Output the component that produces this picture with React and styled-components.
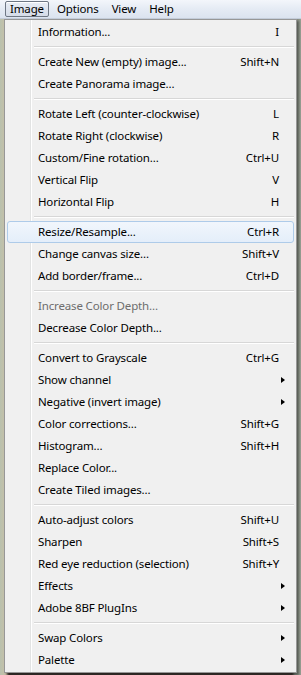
import styled, { createGlobalStyle } from "styled-components";

const GlobalStyle = createGlobalStyle`
    html, body { margin: 0; padding: 0; }
    body {
        font-family: "Noto Sans", "Liberation Sans", sans-serif;
        font-size: 11.5px;
        letter-spacing: -0.15px;
        color: #000;
    }
`;

const groups = [
    [{ label: "Information...", shortcut: "I" }],
    [
        { label: "Create New (empty) image...", shortcut: "Shift+N" },
        { label: "Create Panorama image..." },
    ],
    [
        { label: "Rotate Left (counter-clockwise)", shortcut: "L" },
        { label: "Rotate Right (clockwise)", shortcut: "R" },
        { label: "Custom/Fine rotation...", shortcut: "Ctrl+U" },
        { label: "Vertical Flip", shortcut: "V" },
        { label: "Horizontal Flip", shortcut: "H" },
    ],
    [
        { label: "Resize/Resample...", shortcut: "Ctrl+R", active: true },
        { label: "Change canvas size...", shortcut: "Shift+V" },
        { label: "Add border/frame...", shortcut: "Ctrl+D" },
    ],
    [
        { label: "Increase Color Depth...", disabled: true },
        { label: "Decrease Color Depth..." },
    ],
    [
        { label: "Convert to Grayscale", shortcut: "Ctrl+G" },
        { label: "Show channel", sub: true },
        { label: "Negative (invert image)", sub: true },
        { label: "Color corrections...", shortcut: "Shift+G" },
        { label: "Histogram...", shortcut: "Shift+H" },
        { label: "Replace Color..." },
        { label: "Create Tiled images..." },
    ],
    [
        { label: "Auto-adjust colors", shortcut: "Shift+U" },
        { label: "Sharpen", shortcut: "Shift+S" },
        { label: "Red eye reduction (selection)", shortcut: "Shift+Y" },
        { label: "Effects", sub: true },
        { label: "Adobe 8BF PlugIns", sub: true },
    ],
    [
        { label: "Swap Colors", sub: true },
        { label: "Palette", sub: true },
    ],
];

export default function App() {
    return (
        <Screen>
            <GlobalStyle />
            <MenuBar>
                <TopItem $open>Image</TopItem>
                <TopItem>Options</TopItem>
                <TopItem>View</TopItem>
                <TopItem>Help</TopItem>
            </MenuBar>
            <Desk>
                <Panel>
                    {groups.map((group, gi) => (
                        <div key={gi}>
                            {gi > 0 && <Separator />}
                            {group.map((item) => (
                                <Item key={item.label} $active={item.active} $disabled={item.disabled}>
                                    <span>{item.label}</span>
                                    {item.shortcut && <Shortcut>{item.shortcut}</Shortcut>}
                                    {item.sub && <Arrow />}
                                </Item>
                            ))}
                        </div>
                    ))}
                </Panel>
            </Desk>
        </Screen>
    );
}

const Screen = styled.div`
    width: 301px;
    height: 675px;
    overflow: hidden;
    display: flex;
    flex-direction: column;
    background: linear-gradient(180deg, #9aa89a 0%, #b5b9a4 40%, #c9b79a 70%, #8a7c6c 95%, #3c3430 100%);
`;

const MenuBar = styled.div`
    height: 19px;
    display: flex;
    align-items: center;
    padding-left: 5px;
    box-sizing: border-box;
    background: linear-gradient(180deg, #f3f6fb 0%, #e5ebf4 50%, #dbe3ef 100%);
    border-bottom: 1px solid #c3ccd9;
`;

const TopItem = styled.div`
    height: 16px;
    line-height: 14px;
    padding: 0 4px;
    margin-right: 3px;
    box-sizing: border-box;
    border: 1px solid ${(p) => (p.$open ? "#6e7784" : "transparent")};
    border-radius: 2px;
    background: ${(p) => (p.$open ? "linear-gradient(180deg, #e8edf5, #d5dce8)" : "transparent")};
    box-shadow: ${(p) => (p.$open ? "inset 0 1px 0 #fff" : "none")};
`;

const Desk = styled.div`
    flex: 1;
    display: flex;
    padding-left: 4px;
    background: linear-gradient(90deg, #b9c1ae 0%, #c7bfa6 2%, transparent 3%, transparent 97%, #7d857a 98%, #9aa094 100%);
`;

const Panel = styled.div`
    width: 293px;
    height: 654px;
    box-sizing: border-box;
    padding: 1px 2px 2px 2px;
    background: #f0f0f0;
    border: 1px solid #979797;
    box-shadow: 2px 2px 2px rgba(0, 0, 0, 0.35);
    background-image: linear-gradient(90deg, transparent 25px, #e2e3e3 25px, #e2e3e3 26px, #ffffff 26px, #ffffff 27px, transparent 27px);
`;

const Item = styled.div`
    position: relative;
    height: 22px;
    display: flex;
    align-items: center;
    padding-left: 30px;
    padding-right: 14px;
    padding-bottom: 1px;
    box-sizing: border-box;
    color: ${(p) => (p.$disabled ? "#6d6d6d" : "#000")};
    border: 1px solid ${(p) => (p.$active ? "#aecbe9" : "transparent")};
    border-radius: 3px;
    background: ${(p) => (p.$active ? "linear-gradient(180deg, #f1f6fc 0%, #e4eefa 100%)" : "transparent")};
    span { white-space: nowrap; }
`;

const Shortcut = styled.span`
    margin-left: auto;
`;

const Arrow = styled.i`
    position: absolute;
    right: 8px;
    top: 7px;
    width: 0;
    height: 0;
    border-top: 3.5px solid transparent;
    border-bottom: 3.5px solid transparent;
    border-left: 4px solid #000;
`;

const Separator = styled.div`
    height: 8px;
    margin-left: 27px;
    display: flex;
    flex-direction: column;
    justify-content: center;
    &::before {
        content: "";
        height: 1px;
        background: #d7d7d7;
    }
    &::after {
        content: "";
        height: 1px;
        background: #ffffff;
    }
`;
